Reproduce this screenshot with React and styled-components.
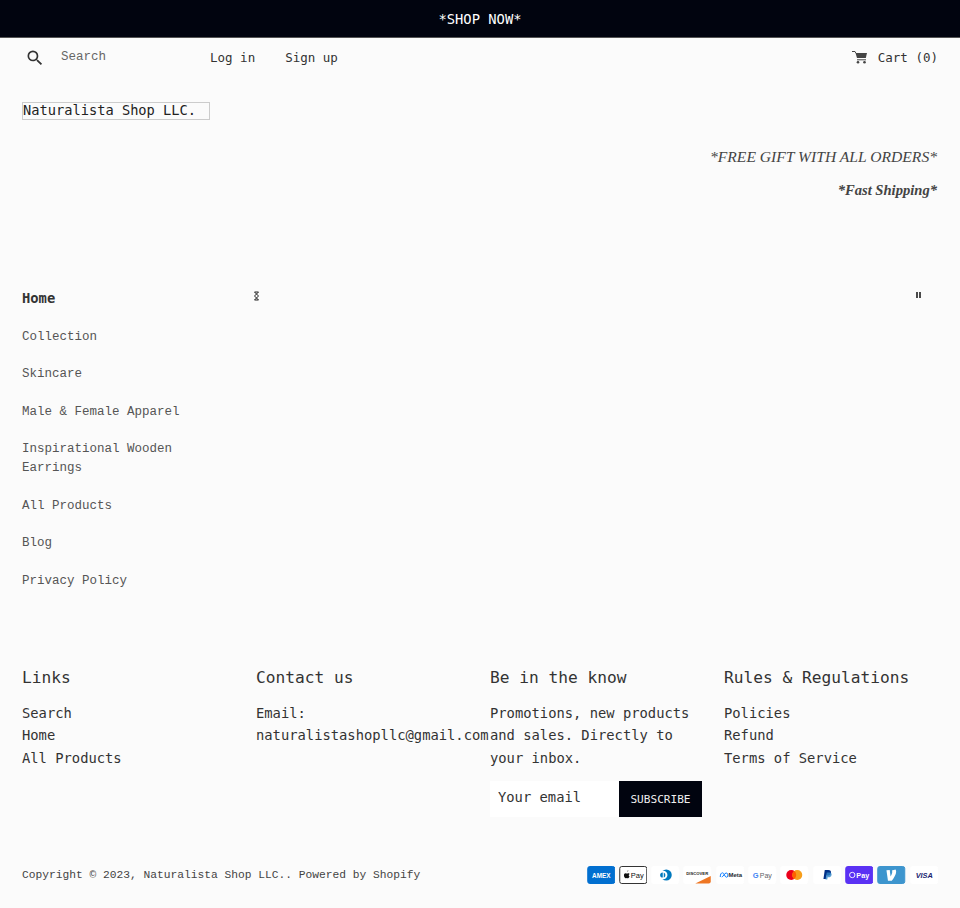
import React from 'react';
import styled, { createGlobalStyle } from 'styled-components';
import { MdSearch } from 'react-icons/md';

const GlobalStyle = createGlobalStyle`
    html, body {
        margin: 0;
        padding: 0;
        background: #fbfbfb;
        color: #333;
        font-family: "DejaVu Sans Mono", monospace;
    }
    * { box-sizing: border-box; }
    ::placeholder { color: inherit; opacity: 1; }
`;

const Page = styled.div`
    width: 960px;
    height: 908px;
    overflow: hidden;
    display: flex;
    flex-direction: column;
`;

const Announcement = styled.div`
    height: 38px;
    background: #01040f;
    border-bottom: 1px solid #555;
    color: #fff;
    font-size: 13.8px;
    display: flex;
    align-items: center;
    justify-content: center;
`;

const TopBar = styled.div`
    height: 39px;
    padding: 0 22px 0 25px;
    display: flex;
    align-items: center;
    font-size: 12.5px;
`;

const SearchForm = styled.form`
    width: 185px;
    display: flex;
    align-items: center;
    color: #666;
    font-family: "Liberation Mono", monospace;
    svg { color: #333; flex: none; margin-top: 1px; }
`;

const SearchInput = styled.input`
    width: 120px;
    margin: -1px 0 0 16px;
    padding: 0;
    border: none;
    background: transparent;
    font: inherit;
    color: inherit;
`;

const TopLink = styled.a`
    margin-right: 30px;
    color: #333;
    font-size: 12.5px;
`;

const Cart = styled.a`
    margin-left: auto;
    display: flex;
    align-items: center;
    gap: 11px;
    color: #333;
    svg { color: #444; }
`;

const Logo = styled.div`
    width: 188px;
    height: 18px;
    margin: 25px 0 0 22px;
    border: 1px solid #ccc;
    font-size: 13.7px;
    line-height: 15px;
    color: #222;
`;

const Promo = styled.div`
    margin-top: 25.5px;
    padding-right: 23px;
    text-align: right;
    font-family: "Liberation Serif", serif;
    font-size: 15.6px;
    line-height: 22px;
    color: #444;
`;

const PromoLine = styled.p`
    margin: 0 0 11.5px;
    font-style: italic;
    font-weight: ${props => (props.$bold ? 700 : 400)};
    font-size: ${props => (props.$bold ? '14.6px' : 'inherit')};
`;

const Main = styled.div`
    margin-top: 76px;
    padding-left: 22px;
    display: flex;
`;

const SideNav = styled.ul`
    width: 232px;
    margin: 0;
    padding: 0;
    list-style: none;
    flex: none;
    font-size: 12.5px;
    line-height: 18.75px;
`;

const NavItem = styled.li`
    width: 190px;
    margin-bottom: ${props => (props.$active ? '20.6px' : '18.75px')};
    color: ${props => (props.$active ? '#333' : '#555')};
    font-family: ${props => (props.$active ? '"DejaVu Sans Mono"' : '"Liberation Mono"')}, monospace;
    font-weight: ${props => (props.$active ? 700 : 400)};
    font-size: ${props => (props.$active ? '13.8px' : '12.5px')};
`;

const SlideControls = styled.div`
    flex: 1;
    height: 20px;
    margin-top: 2px;
    padding: 0 39px 0 0;
    display: flex;
    justify-content: space-between;
    svg { display: block; }
`;

const PauseIcon = styled.svg`
    margin-top: 1px;
`;

const Footer = styled.div`
    margin-top: 55.5px;
    padding-left: 22px;
    display: grid;
    grid-template-columns: repeat(4, 234px);
`;

const FooterTitle = styled.h4`
    margin: 0 0 12px;
    font-size: 16.2px;
    font-weight: 400;
    line-height: 25px;
    color: #333;
`;

const FooterText = styled.div`
    max-width: 212px;
    font-size: 13.8px;
    line-height: 22.5px;
    color: #333;
    white-space: ${props => (props.$nowrap ? 'nowrap' : 'normal')};
`;

const Subscribe = styled.form`
    display: flex;
    width: 212px;
    height: 36px;
    margin-top: 12px;
`;

const EmailInput = styled.input`
    width: 129px;
    padding: 0 8px 4px;
    border: none;
    background: #fff;
    font: inherit;
    font-size: 13.8px;
    color: #333;
`;

const SubscribeButton = styled.button`
    flex: 1;
    border: none;
    background: #01040f;
    color: #f0f0f0;
    font-family: inherit;
    font-size: 11.1px;
    padding: 0;
`;

const BottomBar = styled.div`
    margin-top: 49px;
    padding: 0 22px;
    display: flex;
    align-items: center;
    justify-content: space-between;
    font-family: "Liberation Mono", monospace;
    font-size: 11.25px;
    color: #444;
`;

const Payments = styled.div`
    display: flex;
    gap: 3.8px;
    svg { display: block; }
`;

const Card = ({ bg = '#fff', border = 'none', children }) => (
    <svg width="28.5" height="18" viewBox="0 0 28 18" role="img">
        <rect x=".5" y=".5" width="27" height="17" rx="2" fill={bg} stroke={border === 'none' ? bg : border} />
        {children}
    </svg>
);

const cardText = { fontFamily: '"Liberation Sans", sans-serif', fontWeight: 700, textAnchor: 'middle' };

function PaymentIcons() {
    return (
        <Payments>
            <Card bg="#016fd0">
                <text x="14" y="11.5" fontSize="6.4" fill="#fff" style={cardText}>AMEX</text>
            </Card>
            <Card border="#333">
                <path d="M8 5.600c.5 0 1-.4 1.100-1-.5 0-1.100.4-1.100 1zM9.500 9.300c0-.9.700-1.300.8-1.400-.4-.6-1.100-.7-1.300-.7-.6 0-1.100.3-1.400.3s-.7-.3-1.200-.3c-1.300 0-2 1.300-1.600 3 .3.900.9 2 1.600 2 .4 0 .7-.3 1.200-.3s.7.300 1.200.3c.7 0 1.300-1 1.500-1.700-.4-.2-.8-.6-.8-1.200z" fill="#111" />
                <text x="18" y="12" fontSize="7.500" fill="#111" style={{ ...cardText, fontWeight: 400 }}>Pay</text>
            </Card>
            <Card>
                <circle cx="15" cy="9" r="5.500" fill="#0079be" />
                <circle cx="12" cy="9" r="4.200" fill="#fff" />
                <circle cx="11.500" cy="9" r="2.600" fill="#0079be" />
                <rect x="11.500" y="5" width="1" height="8" fill="#fff" />
            </Card>
            <Card>
                <path d="M12 17.500 27.500 10v5.500a2 2 0 0 1-2 2z" fill="#ee7623" />
                <text x="14" y="8.500" fontSize="4.200" fill="#222" style={cardText}>DISCOVER</text>
            </Card>
            <Card>
                <path d="M4 11c0-5 3-5 4-2.500S10 11.500 11 11c1-.6 1-4-1-4S7 11 5.500 11" fill="none" stroke="#0a7cff" strokeWidth="1" />
                <text x="19" y="11.300" fontSize="6" fill="#1c2b33" style={cardText}>Meta</text>
            </Card>
            <Card>
                <text x="7.500" y="12" fontSize="7.500" fill="#4285f4" style={cardText}>G</text>
                <text x="17.500" y="12" fontSize="7" fill="#5f6368" style={{ ...cardText, fontWeight: 400 }}>Pay</text>
            </Card>
            <Card>
                <circle cx="11" cy="9" r="5" fill="#eb001b" />
                <circle cx="17" cy="9" r="5" fill="#f79e1b" />
                <path d="M14 5a5 5 0 0 1 0 8 5 5 0 0 1 0-8z" fill="#ff5f00" />
            </Card>
            <Card>
                <path d="M11.500 4h3.500c2.200 0 3 1.300 2.700 2.900-.3 1.800-1.600 2.700-3.300 2.700h-1.200l-.6 3.400h-2.400z" fill="#003087" />
                <path d="M13.500 6.500h2.800c1.500 0 2.300 1 2 2.400-.3 1.600-1.500 2.400-3 2.400h-.9l-.4 2.200h-1.800z" fill="#3086c8" opacity=".8" />
            </Card>
            <Card bg="#5a31f4">
                <circle cx="7" cy="9" r="2.700" fill="none" stroke="#fff" strokeWidth=".9" />
                <text x="17.500" y="11.700" fontSize="7.200" fill="#fff" style={cardText}>Pay</text>
            </Card>
            <Card bg="#3d95ce">
                <path d="M17.800 4.200c.4.700.6 1.400.6 2.300 0 2.800-2.400 6.500-4.400 9h-3.800L8.700 5l3.300-.3.800 6.700c.8-1.200 1.700-3.200 1.700-4.500 0-.7-.1-1.200-.3-1.600z" fill="#fff" transform="translate(.5 -.8)" />
            </Card>
            <Card>
                <text x="14" y="11.700" fontSize="7.400" fill="#1a1f71" style={{ ...cardText, fontStyle: 'italic' }}>VISA</text>
            </Card>
        </Payments>
    );
}

function CartIcon() {
    return (
        <svg width="15" height="13" viewBox="0 0 15 13" fill="currentColor">
            <path d="M0 .5h3l.8 1.500" fill="none" stroke="currentColor" />
            <path d="M3.500 2H15l-1.200 5H5z" />
            <path d="M5 8.300h9v1H5z" />
            <circle cx="6" cy="11.300" r="1.300" />
            <circle cx="12.500" cy="11.300" r="1.300" />
        </svg>
    );
}

const navLinks = [
    'Collection',
    'Skincare',
    'Male & Female Apparel',
    'Inspirational Wooden Earrings',
    'All Products',
    'Blog',
    'Privacy Policy',
];

function App() {
    return (
        <Page>
            <GlobalStyle />
            <Announcement>*SHOP NOW*</Announcement>
            <TopBar>
                <SearchForm>
                    <MdSearch size={20} />
                    <SearchInput placeholder="Search" />
                </SearchForm>
                <TopLink>Log in</TopLink>
                <TopLink>Sign up</TopLink>
                <Cart>
                    <CartIcon />
                    Cart (0)
                </Cart>
            </TopBar>
            <Logo>Naturalista Shop LLC.</Logo>
            <Promo>
                <PromoLine>*FREE GIFT WITH ALL ORDERS*</PromoLine>
                <PromoLine $bold>*Fast Shipping*</PromoLine>
            </Promo>
            <Main>
                <SideNav>
                    <NavItem $active>Home</NavItem>
                    {navLinks.map(link => <NavItem key={link}>{link}</NavItem>)}
                </SideNav>
                <SlideControls>
                    <svg width="5" height="10" viewBox="0 0 5 10">
                        <path d="M.5 1h4M.5 1l4 4M4.500 1l-4 4M.5 5l4 4M4.500 5l-4 4M.5 9h4" stroke="#222" strokeWidth="1" fill="none" />
                    </svg>
                    <PauseIcon width="5" height="6" viewBox="0 0 5 6">
                        <path d="M1 0v6M4 0v6" stroke="#111" strokeWidth="1.500" />
                    </PauseIcon>
                </SlideControls>
            </Main>
            <Footer>
                <div>
                    <FooterTitle>Links</FooterTitle>
                    <FooterText>Search<br />Home<br />All Products</FooterText>
                </div>
                <div>
                    <FooterTitle>Contact us</FooterTitle>
                    <FooterText $nowrap>Email:<br />naturalistashopllc@gmail.com</FooterText>
                </div>
                <div>
                    <FooterTitle>Be in the know</FooterTitle>
                    <FooterText>Promotions, new products and sales. Directly to your inbox.</FooterText>
                    <Subscribe>
                        <EmailInput placeholder="Your email" />
                        <SubscribeButton type="button">SUBSCRIBE</SubscribeButton>
                    </Subscribe>
                </div>
                <div>
                    <FooterTitle>Rules &amp; Regulations</FooterTitle>
                    <FooterText>Policies<br />Refund<br />Terms of Service</FooterText>
                </div>
            </Footer>
            <BottomBar>
                <span>Copyright © 2023, Naturalista Shop LLC.. Powered by Shopify</span>
                <PaymentIcons />
            </BottomBar>
        </Page>
    );
}

export default App;
